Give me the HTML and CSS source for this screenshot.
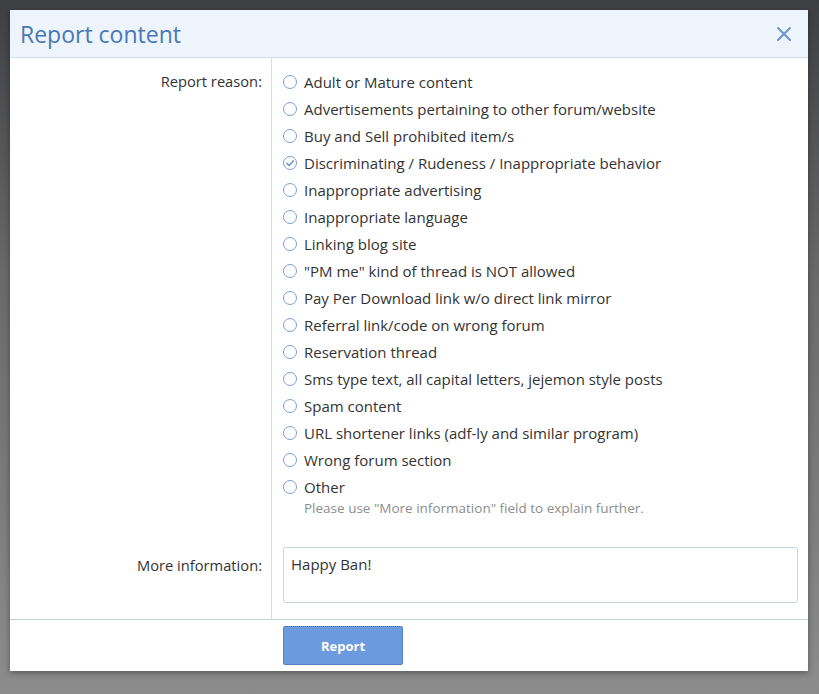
FILE: index.html
```html
<!DOCTYPE html>
<html>
<head>
<meta charset="utf-8">
<link rel="stylesheet" href="styles.css">
</head>
<body>
<div class="backdrop">
  <div class="dialog">
    <div class="header">
      <h1 class="title">Report content</h1>
      <svg class="close" width="14" height="14" viewBox="0 0 14 14"><path d="M1 1L13 13M13 1L1 13" stroke="#6b95cf" stroke-width="2" stroke-linecap="round"/></svg>
    </div>
    <div class="body">
      <div class="row">
        <div class="label label-reason">Report reason:</div>
        <div class="field">
          <ul class="options">
            <li><span class="radio"></span>Adult or Mature content</li>
            <li><span class="radio"></span>Advertisements pertaining to other forum/website</li>
            <li><span class="radio"></span>Buy and Sell prohibited item/s</li>
            <li><span class="radio checked"><svg width="14" height="14" viewBox="0 0 14 14"><path d="M3.8 7.2L6.1 9.5L10.4 4.7" fill="none" stroke="#6b95cf" stroke-width="1.5" stroke-linecap="round" stroke-linejoin="round"/></svg></span>Discriminating / Rudeness / Inappropriate behavior</li>
            <li><span class="radio"></span>Inappropriate advertising</li>
            <li><span class="radio"></span>Inappropriate language</li>
            <li><span class="radio"></span>Linking blog site</li>
            <li><span class="radio"></span>"PM me" kind of thread is NOT allowed</li>
            <li><span class="radio"></span>Pay Per Download link w/o direct link mirror</li>
            <li><span class="radio"></span>Referral link/code on wrong forum</li>
            <li><span class="radio"></span>Reservation thread</li>
            <li><span class="radio"></span>Sms type text, all capital letters, jejemon style posts</li>
            <li><span class="radio"></span>Spam content</li>
            <li><span class="radio"></span>URL shortener links (adf-ly and similar program)</li>
            <li><span class="radio"></span>Wrong forum section</li>
            <li><span class="radio"></span>Other</li>
          </ul>
          <div class="hint">Please use "More information" field to explain further.</div>
        </div>
      </div>
      <div class="row row-info">
        <div class="label label-info">More information:</div>
        <div class="field field-info">
          <div class="textarea">Happy Ban!</div>
        </div>
      </div>
    </div>
    <div class="footer">
      <div class="footer-spacer"></div>
      <div class="footer-main"><button class="button">Report</button></div>
    </div>
  </div>
</div>
</body>
</html>
```

FILE: styles.css
```css
* { box-sizing: border-box; }
html, body { margin: 0; padding: 0; }
body {
  width: 819px;
  height: 694px;
  overflow: hidden;
  font-family: "Open Sans", "DejaVu Sans", sans-serif;
  color: #333;
}
.backdrop {
  width: 819px;
  height: 694px;
  padding: 10px 11px 0 10px;
  background: linear-gradient(180deg, #3e3f43 0%, #6a6a6a 40%, #8c8c8c 100%);
}
.dialog {
  width: 798px;
  height: 661px;
  background: #fff;
  display: flex;
  flex-direction: column;
  box-shadow: 0 2px 6px rgba(0,0,0,0.35);
}
.header {
  height: 48px;
  background: #edf4fb;
  border-bottom: 1px solid #d3dde6;
  display: flex;
  align-items: center;
  justify-content: space-between;
  padding: 0 17px 0 10px;
}
.title {
  margin: 0;
  font-size: 23px;
  font-weight: 400;
  color: #4a78b7;
}
.close { display: block; margin-top: 1px; }
.body {
  flex: 1;
  display: flex;
  flex-direction: column;
}
.row { display: flex; }
.label {
  width: 262px;
  flex: none;
  text-align: right;
  padding-right: 9px;
  font-size: 14.7px;
  border-right: 1px solid #d6dde3;
}
.label-reason { padding-top: 13px; }
.field {
  flex: 1;
  padding-left: 11px;
  padding-right: 10px;
}
.options {
  list-style: none;
  margin: 0;
  padding: 10px 0 0 0;
}
.options li {
  height: 27px;
  display: flex;
  align-items: center;
  font-size: 15px;
  white-space: nowrap;
}
.radio {
  width: 14px;
  height: 14px;
  border: 1.4px solid #7a9fcf;
  border-radius: 50%;
  margin-right: 7px;
  flex: none;
  position: relative;
  margin-top: 1px;
}
.radio svg { position: absolute; left: -1.4px; top: -1.4px; }
.hint {
  font-size: 13.5px;
  line-height: 16px;
  color: #8d8d8d;
  padding-left: 21px;
  margin-top: 0;
  padding-bottom: 31px;
}
.row-info { flex: 1; }
.label-info { padding-top: 8px; }
.field-info { padding-bottom: 16px; }
.textarea {
  width: 515px;
  height: 56px;
  border: 1px solid #c9d3da;
  border-radius: 3px;
  padding: 6px 7px;
  font-size: 15px;
}
.footer {
  height: 52px;
  border-top: 1px solid #c6d2da;
  display: flex;
}
.footer-spacer { width: 262px; flex: none; }
.footer-main { padding: 6px 0 0 11px; }
.button {
  width: 120px;
  height: 39px;
  background: #6b9ade;
  border: 1px dotted #3f6aa7;
  border-radius: 2px;
  color: #fff;
  font-family: "Open Sans", "DejaVu Sans", sans-serif;
  font-weight: 700;
  font-size: 13px;
  padding: 0;
}
```
